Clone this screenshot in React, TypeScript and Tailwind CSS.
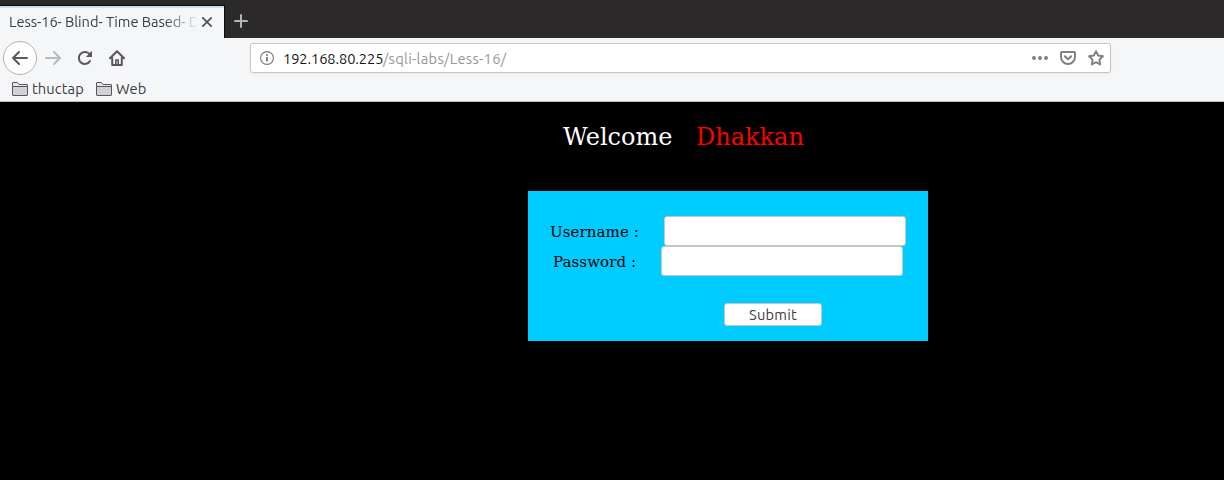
import React from "react";

const uiFont = "font-['Ubuntu','Noto_Sans',sans-serif]";

function Folder() {
  return (
    <svg width="17" height="15" viewBox="0 0 17 15" className="shrink-0">
      <path d="M.5 13V1q0-.5.5-.5H5.5l1.5 2H15q.5 0 .5.5v10q0 .5-.5.5H1q-.5 0-.5-.5Z" fill="#e6e7e8" stroke="#58585a" />
      <path d="M1 5h14v8H1Z" fill="#d0d1d2" />
      <path d="M1 4.5H15" stroke="#58585a" />
    </svg>
  );
}

function BrowserChrome() {
  return (
    <header className={`${uiFont} text-[#3b3c3e]`}>
      <div className="flex h-[38px] bg-[#2c292a] pt-[5px]">
        <div className="flex h-[33px] w-[225px] shrink-0 border-t border-r border-[#0c0c0d] bg-[#f5f6f7]">
          <div className="flex w-full items-center border-t-2 border-[#bfe4fb] pl-[9px]">
            <div className="-mt-[2px] w-[187px] shrink-0 whitespace-nowrap text-[14.667px] leading-[20px] tracking-[-0.06px] [mask-image:linear-gradient(to_right,black_155px,transparent_190px)]">
              Less-16- Blind- Time Based- D
            </div>
            <svg width="12" height="12" viewBox="0 0 12 12" className="-mt-[2px] ml-[5px] shrink-0">
              <path d="m1.8 1.8 8.4 8.4m0-8.4-8.4 8.4" stroke="#4d4e51" strokeWidth="1.7" strokeLinecap="round" />
            </svg>
          </div>
        </div>
        <div className="flex h-[32px] w-8 items-center justify-center">
          <svg width="16" height="16" viewBox="0 0 16 16">
            <path d="M8 2v12M2 8h12" stroke="#b7b6b7" strokeWidth="2" strokeLinecap="round" />
          </svg>
        </div>
      </div>
      <div className="flex h-10 items-center bg-[#f5f6f7] pl-[3px]">
        <div className="flex size-[34px] shrink-0 items-center justify-center rounded-full border border-[#b1b1b3] bg-[#fdfdfd]">
          <svg width="18" height="16" viewBox="0 0 18 16" fill="none" stroke="#58585b" strokeWidth="2" strokeLinecap="round" strokeLinejoin="round">
            <path d="M16 8H2m6-6L2 8l6 6" />
          </svg>
        </div>
        <svg className="ml-[7px] shrink-0" width="18" height="16" viewBox="0 0 18 16" fill="none" stroke="#b8b9bb" strokeWidth="2" strokeLinecap="round" strokeLinejoin="round">
          <path d="M2 8h14m-6-6 6 6-6 6" />
        </svg>
        <svg className="ml-[15px] shrink-0" width="16" height="16" viewBox="0 0 16 16">
          <path d="M13 11.1A6 6 0 1 1 12 3.6" fill="none" stroke="#58585b" strokeWidth="2" strokeLinecap="round" />
          <path d="M15 .7V7H8.8Z" fill="#58585b" />
        </svg>
        <svg className="ml-4 shrink-0" width="16" height="16" viewBox="0 0 16 16" fill="none" stroke="#58585b" strokeWidth="2" strokeLinecap="round" strokeLinejoin="round">
          <path d="M1 8.3 8 1.2l7 7.1M3.2 8v7h9.6V8" />
          <path d="M6.8 15V10h2.4V15" strokeWidth="1.6" />
        </svg>
        <div className="ml-[125px] flex h-[30px] w-[861px] items-center rounded-[3px] border border-[#c3c5c9] bg-white pr-[6px] pl-[9px] shadow-[0_1px_3px_rgba(0,0,0,0.05)]">
          <svg width="14" height="14" viewBox="0 0 14 14">
            <circle cx="7" cy="7" r="6.4" fill="none" stroke="#77777a" strokeWidth="1.1" />
            <path d="M7 6v4.5" stroke="#77777a" strokeWidth="1.8" />
            <circle cx="7" cy="3.9" r="1" fill="#77777a" />
          </svg>
          <div className="ml-[9px] flex grow pt-px text-[14.667px] leading-5 whitespace-nowrap">
            <span className="w-[100px] tracking-[-0.1px] text-[#17171a]">192.168.80.225</span>
            <span className="tracking-[0.28px] text-[#96969a]">/sqli-labs/Less-16/</span>
          </div>
          <svg width="16" height="16" viewBox="0 0 16 16" fill="#7f7f82">
            <circle cx="2" cy="8" r="2" />
            <circle cx="8" cy="8" r="2" />
            <circle cx="14" cy="8" r="2" />
          </svg>
          <svg className="ml-3" width="16" height="16" viewBox="0 0 16 16" fill="none" stroke="#7f7f82" strokeWidth="2" strokeLinecap="round" strokeLinejoin="round">
            <path d="M2 2h12q1 0 1 1v4A7 7 0 0 1 1 7V3q0-1 1-1Z" />
            <path d="m4.8 6.2 3.2 3 3.2-3" />
          </svg>
          <svg className="ml-3" width="16" height="16" viewBox="0 0 16 16" fill="none" stroke="#7f7f82" strokeWidth="1.9" strokeLinejoin="round">
            <path d="m8 1.2 2.1 4.3 4.8.7-3.5 3.4.8 4.9L8 12.2l-4.2 2.3.8-4.9L1.1 6.2l4.8-.7Z" />
          </svg>
        </div>
      </div>
      <nav className="flex h-6 items-center border-b border-[#b9bfc4] bg-[#f5f6f7] pb-px pl-3 text-[14.667px] leading-5">
        <Folder />
        <span className="ml-[3px] w-[52px] tracking-[0.1px]">thuctap</span>
        <span className="ml-3 flex">
          <Folder />
        </span>
        <span className="ml-[3px] tracking-[0.15px]">Web</span>
      </nav>
    </header>
  );
}

export default function App() {
  return (
    <div className="h-[480px] w-[1224px] overflow-hidden bg-black">
      <BrowserChrome />
      <main className="font-['DejaVu_Serif',serif]">
        <h1 className="flex h-[89px] pt-[21px] pl-[563px] text-[24px] leading-[28px] whitespace-nowrap">
          <span className="w-[133px] text-white">Welcome</span>
          <span className="text-[#ff0000]">Dhakkan</span>
        </h1>
        <form className="ml-[528px] h-[150px] w-[400px] bg-[#00ccff] pt-[25px] text-[15px] text-black" onSubmit={(e) => e.preventDefault()}>
          <label className="flex h-[30px] items-center pl-[22px]">
            <span className="w-[114px] pt-[2px] tracking-[0.1px] whitespace-nowrap">Username :</span>
            <input type="text" className="h-[30px] w-[242px] rounded-[3px] border border-[#c3c5c9] bg-white px-2 outline-none" />
          </label>
          <label className="flex h-[30px] items-center pl-[25px]">
            <span className="w-[108px] pt-[2px] tracking-[0.1px] whitespace-nowrap">Password :</span>
            <input type="password" className="h-[30px] w-[242px] rounded-[3px] border border-[#c3c5c9] bg-white px-2 outline-none" />
          </label>
          <button type="submit" className={`${uiFont} mt-[27px] ml-[196px] flex h-[23px] w-[98px] items-center justify-center rounded-[3px] border border-[#c3c5c9] bg-white pt-px text-[14.667px] tracking-[0.25px] text-[#3b3c3e]`}>
            Submit
          </button>
        </form>
      </main>
    </div>
  );
}
